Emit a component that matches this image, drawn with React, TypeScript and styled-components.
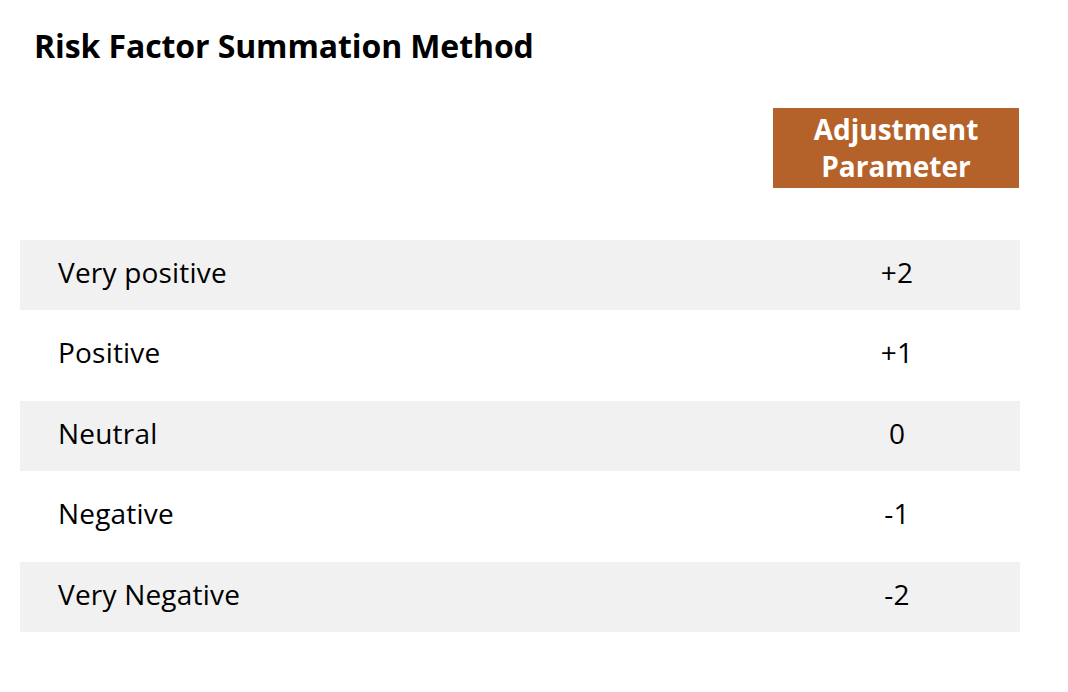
import React from "react";
import styled, { createGlobalStyle } from "styled-components";

const GlobalStyle = createGlobalStyle`
  html, body { margin: 0; padding: 0; background: #ffffff; }
  body { font-family: "Open Sans", "Noto Sans", sans-serif; color: #000; }
`;

const Page = styled.div`
  width: 1068px;
  height: 692px;
  box-sizing: border-box;
  padding: 24px 48px 0 20px;
  display: flex;
  flex-direction: column;
`;

const Title = styled.h1`
  margin: 0 0 0 14px;
  font-size: 32px;
  font-weight: 700;
  line-height: 44px;
  letter-spacing: -0.1px;
`;

const HeaderRow = styled.div`
  display: flex;
  justify-content: flex-end;
  margin-top: 40px;
  width: 1000px;
`;

const HeaderCell = styled.div`
  width: 246px;
  height: 80px;
  margin-right: 1px;
  background: #b5612a;
  color: #ffffff;
  font-weight: 700;
  font-size: 28px;
  line-height: 37px;
  text-align: center;
  display: flex;
  flex-direction: column;
  justify-content: center;
`;

const Table = styled.div`
  margin-top: 52px;
  width: 1000px;
  display: flex;
  flex-direction: column;
`;

const Row = styled.div<{ $shaded: boolean }>`
  height: ${(p) => (p.$shaded ? "70px" : "91px")};
  display: grid;
  grid-template-columns: 1fr 246px;
  align-items: center;
  background: ${(p) => (p.$shaded ? "#f1f1f1" : "transparent")};
  font-size: 28px;
  letter-spacing: 0.2px;
`;

const Label = styled.div`
  padding-left: 38px;
  margin-top: -7px;
`;

const Value = styled.div`
  text-align: center;
  margin-top: -7px;
`;

const rows = [
  ["Very positive", "+2"],
  ["Positive", "+1"],
  ["Neutral", "0"],
  ["Negative", "-1"],
  ["Very Negative", "-2"],
];

export default function App() {
  return (
    <>
      <GlobalStyle />
      <Page>
        <Title>Risk Factor Summation Method</Title>
        <HeaderRow>
          <HeaderCell>
            <span>Adjustment</span>
            <span>Parameter</span>
          </HeaderCell>
        </HeaderRow>
        <Table>
          {rows.map(([label, value], i) => (
            <Row key={label} $shaded={i % 2 === 0}>
              <Label>{label}</Label>
              <Value>{value}</Value>
            </Row>
          ))}
        </Table>
      </Page>
    </>
  );
}
